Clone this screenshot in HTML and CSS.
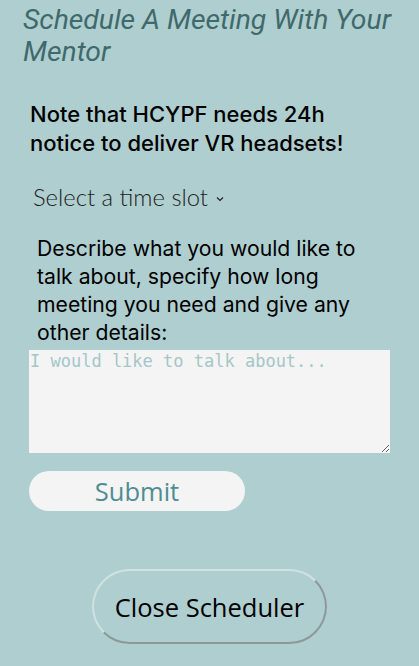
FILE: index.html
```html
<!DOCTYPE html>
<html>
<head>
<meta charset="utf-8">
<link rel="stylesheet" href="styles.css">
</head>
<body>
<main class="scheduler">
  <h1 class="title">Schedule A Meeting With Your Mentor</h1>
  <p class="note">Note that HCYPF needs 24h notice to deliver VR headsets!</p>
  <div class="select">Select a time slot <span class="chev"><svg width="8" height="6" viewBox="0 0 8 6"><path d="M1 1.5l3 3 3-3" fill="none" stroke="#222" stroke-width="1.2"/></svg></span></div>
  <p class="describe">Describe what you would like to talk about, specify how long meeting you need and give any other details:</p>
  <textarea class="details" placeholder="I would like to talk about..."></textarea>
  <button class="submit">Submit</button>
  <div class="close-row"><button class="close">Close Scheduler</button></div>
</main>
</body>
</html>
```
FILE: styles.css
```css
html, body {
  margin: 0;
  padding: 0;
  background: #afcecf;
}
.scheduler {
  display: flex;
  flex-direction: column;
  align-items: flex-start;
  padding: 4px 0 0 0;
}
.title {
  margin: 0 0 0 23px;
  width: 385px;
  font-family: Roboto, sans-serif;
  font-style: italic;
  font-weight: 400;
  font-size: 28.3px;
  line-height: 32px;
  color: #3f6a6b;
}
.note {
  margin: 32px 0 0 30px;
  width: 350px;
  font-family: Inter, sans-serif;
  font-weight: 500;
  font-size: 22px;
  line-height: 29px;
  color: #000;
}
.select {
  margin: 25px 0 0 33px;
  font-family: Lato, sans-serif;
  font-weight: 300;
  font-size: 23.8px;
  line-height: 28px;
  color: #222;
  display: flex;
  align-items: center;
  gap: 8px;
}
.chev { display: flex; padding-top: 3px; }
.describe {
  margin: 23px 0 0 37px;
  width: 340px;
  font-family: Inter, sans-serif;
  font-size: 21.2px;
  line-height: 28px;
  color: #000;
}
.details {
  margin: 4px 0 0 29px;
  width: 361px;
  height: 103px;
  box-sizing: border-box;
  border: none;
  background: #f4f4f4;
  padding: 1px 1px;
  font-family: "DejaVu Sans Mono", monospace;
  font-size: 17px;
  line-height: 20px;
  resize: vertical;
}
.details::placeholder { color: #a5c6c8; }
.submit {
  margin: 18px 0 0 29px;
  width: 216px;
  height: 40px;
  border: none;
  border-radius: 20px;
  background: #f4f4f4;
  color: #4e8c91;
  font-family: "Open Sans", sans-serif;
  font-size: 25.5px;
  padding: 0;
}
.close-row {
  align-self: stretch;
  display: flex;
  justify-content: center;
  margin-top: 58px;
}
.close {
  width: 235px;
  height: 75px;
  box-sizing: border-box;
  border: 2px solid;
  border-color: #cfe1e2 #8f9898 #8f9898 #cfe1e2;
  border-radius: 38px;
  background: transparent;
  color: #000;
  font-family: "Open Sans", sans-serif;
  font-size: 25.5px;
  padding: 0;
}
```
